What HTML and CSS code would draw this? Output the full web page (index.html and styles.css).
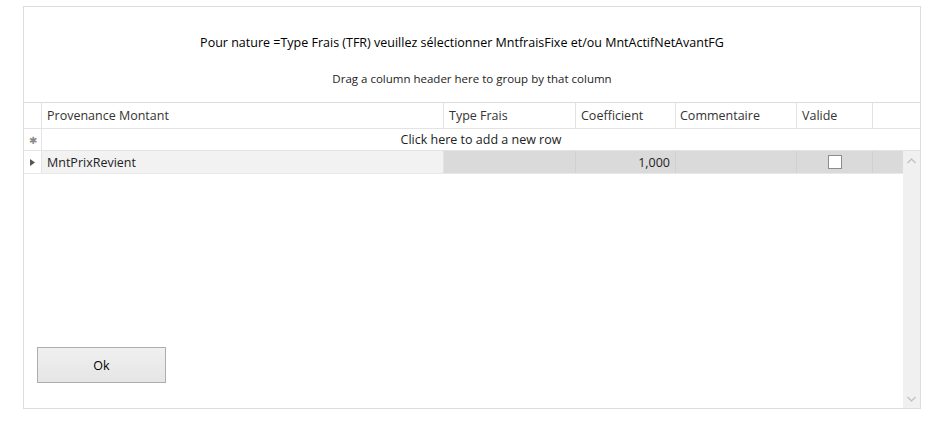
FILE: index.html
```html
<!DOCTYPE html>
<html>
<head>
<meta charset="utf-8">
<link rel="stylesheet" href="styles.css">
</head>
<body>
<div class="frame">
  <div class="top">
    <div class="title">Pour nature =Type Frais (TFR) veuillez sélectionner MntfraisFixe et/ou MntActifNetAvantFG</div>
    <div class="group">Drag a column header here to group by that column</div>
  </div>
  <div class="grid">
    <div class="row head">
      <div class="ind"></div>
      <div class="c c1">Provenance Montant</div>
      <div class="c c2">Type Frais</div>
      <div class="c c3">Coefficient</div>
      <div class="c c4">Commentaire</div>
      <div class="c c5">Valide</div>
      <div class="c c6"></div>
    </div>
    <div class="row newrow">
      <div class="ind"><span class="star">✱</span></div>
      <div class="newtext">Click here to add a new row</div>
    </div>
    <div class="body">
      <div class="rows">
        <div class="row data">
          <div class="ind"><svg width="5" height="7" viewBox="0 0 5 7"><path d="M0 0 L5 3.5 L0 7 Z" fill="#555"/></svg></div>
          <div class="c c1 light">MntPrixRevient</div>
          <div class="c c2"></div>
          <div class="c c3 num">1,000</div>
          <div class="c c4"></div>
          <div class="c c5 chk"><span class="box"></span></div>
          <div class="c c6 last"></div>
        </div>
        <div class="spacer"></div>
        <button class="ok">Ok</button>
      </div>
      <div class="scroll">
        <svg width="9" height="6" viewBox="0 0 9 6"><path d="M0.5 5 L4.5 1 L8.5 5" fill="none" stroke="#bdbdbd" stroke-width="1.2"/></svg>
        <svg width="9" height="6" viewBox="0 0 9 6"><path d="M0.5 1 L4.5 5 L8.5 1" fill="none" stroke="#bdbdbd" stroke-width="1.2"/></svg>
      </div>
    </div>
  </div>
</div>
</body>
</html>
```
FILE: styles.css
```css
html, body {
  margin: 0;
  padding: 0;
  background: #ffffff;
}
body {
  font-family: "Open Sans", "Noto Sans", sans-serif;
  font-size: 12px;
  color: #000;
}
.frame {
  margin: 6px 0 0 23px;
  width: 896px;
  height: 401px;
  border: 1px solid #dcdcdc;
  display: flex;
  flex-direction: column;
}
.top {
  height: 95px;
  display: flex;
  flex-direction: column;
  align-items: center;
}
.title {
  margin-top: 27px;
  font-size: 12.5px;
  padding-right: 20px;
}
.group {
  margin-top: 20px;
  font-size: 11.5px;
  color: #222;
}
.grid {
  flex: 1;
  display: flex;
  flex-direction: column;
  border-top: 1px solid #dcdcdc;
  min-height: 0;
}
.row {
  display: flex;
}
.ind {
  width: 17px;
  flex: none;
  border-right: 1px solid #e3e3e3;
  display: flex;
  align-items: center;
  justify-content: center;
}
.c {
  flex: none;
  border-right: 1px solid #e3e3e3;
  padding: 0 5px;
  box-sizing: border-box;
  display: flex;
  align-items: center;
  white-space: nowrap;
}
.c1 { width: 402px; }
.c2 { width: 132px; }
.c3 { width: 100px; }
.c4 { width: 121px; padding-left: 4px; }
.c5 { width: 76px; }
.c6 { flex: 1; border-right: none; }
.head {
  height: 25px;
  border-bottom: 1px solid #e3e3e3;
  color: #333;
  font-size: 12.5px;
}
.newrow {
  height: 21px;
  border-bottom: 1px solid #e3e3e3;
}
.star {
  font-size: 10px;
  color: #8a8a8a;
}
.newtext {
  flex: 1;
  text-align: center;
  font-size: 12.5px;
  color: #222;
  display: flex;
  align-items: center;
  justify-content: center;
}
.body {
  flex: 1;
  display: flex;
  min-height: 0;
}
.rows {
  flex: 1;
  display: flex;
  flex-direction: column;
}
.data {
  height: 22px;
  border-bottom: 1px solid #e8e8e8;
  font-size: 12.5px;
  color: #222;
}
.data .c {
  background: #dadada;
  border-right-color: #d0d0d0;
}
.data .c.light {
  background: #f2f2f2;
  border-right-color: #e3e3e3;
}
.data .ind {
  background: #fff;
}
.num {
  justify-content: flex-end;
}
.chk {
  justify-content: center;
}
.box {
  width: 12px;
  height: 12px;
  background: #fff;
  border: 1px solid #8c8c8c;
}
.spacer {
  flex: 1;
}
.ok {
  margin: 0 0 25px 13px;
  width: 129px;
  height: 36px;
  border: 1px solid #adadad;
  background: linear-gradient(#f0f0f0, #e5e5e5);
  font-family: inherit;
  font-size: 12.5px;
  color: #000;
  padding: 0;
}
.scroll {
  width: 17px;
  flex: none;
  background: #f0f0f0;
  display: flex;
  flex-direction: column;
  justify-content: space-between;
  align-items: center;
  padding: 7px 0 6px;
  box-sizing: border-box;
}
```
